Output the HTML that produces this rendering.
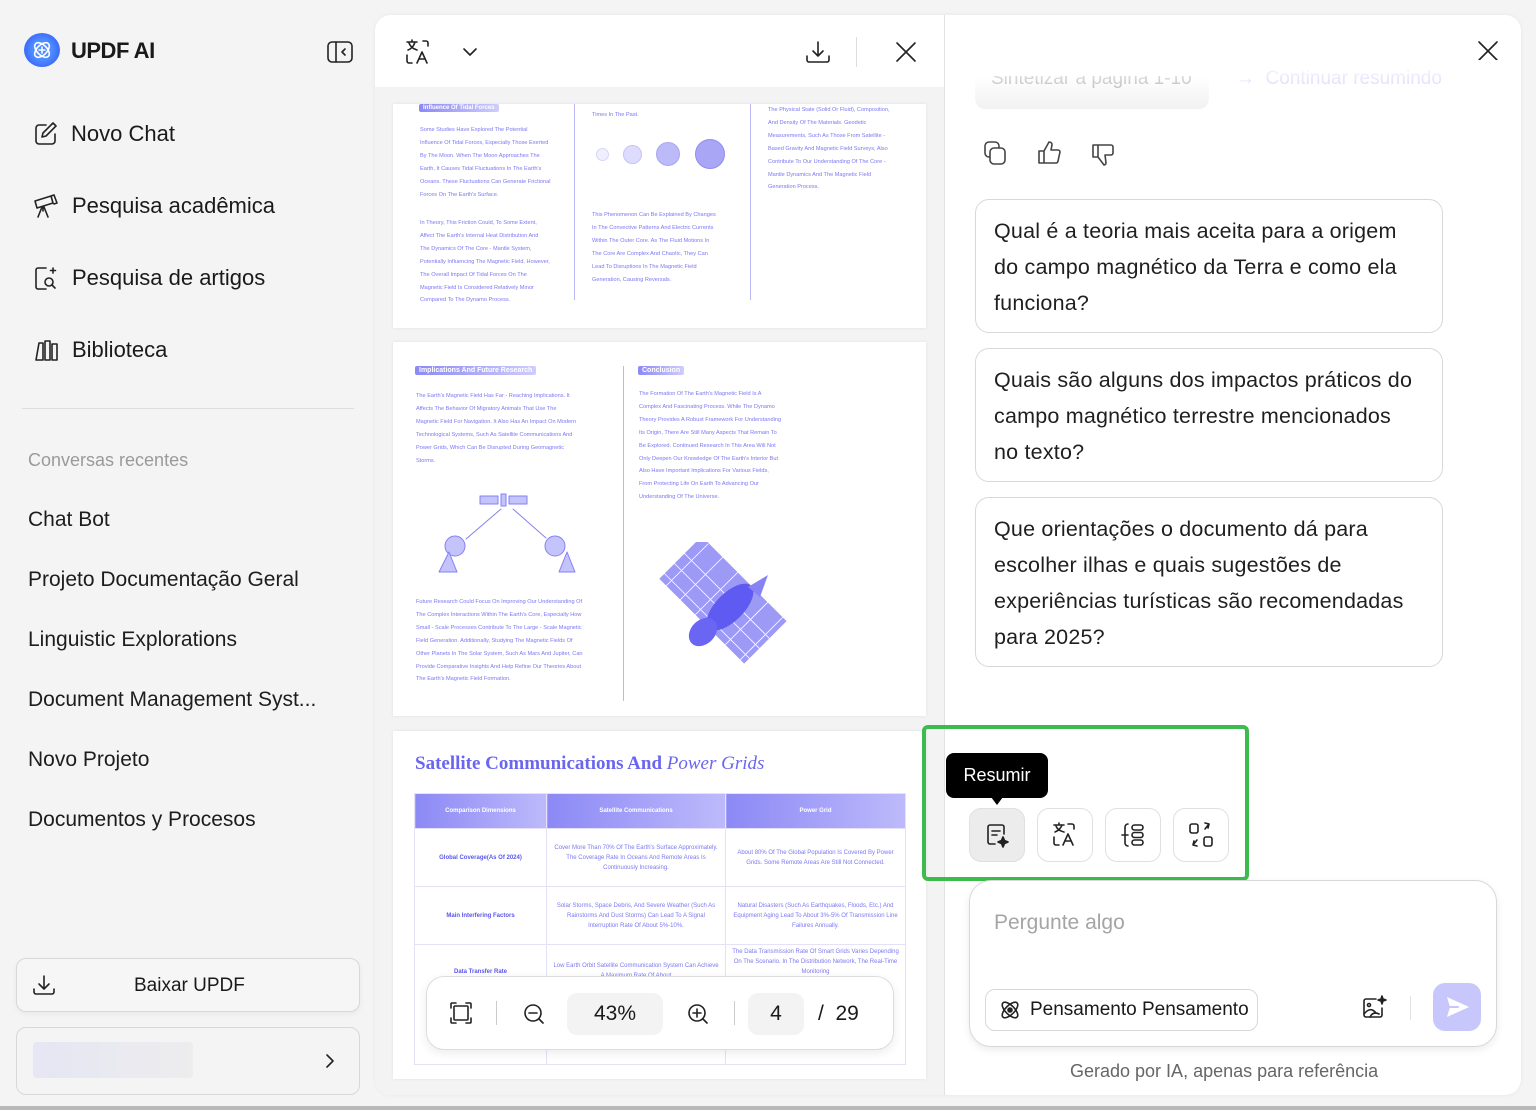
<!DOCTYPE html>
<html><head><meta charset="utf-8"><style>
*{box-sizing:border-box;margin:0;padding:0}
body{width:1536px;height:1110px;background:#f4f4f4;font-family:"Liberation Sans","DejaVu Sans",sans-serif;color:#1a1a1a;position:relative;overflow:hidden}
.a{position:absolute}
.nav{position:absolute;left:32px;font-size:22px;display:flex;align-items:center;gap:12px}
.nav svg{width:28px;height:28px}
.rc{position:absolute;left:28px;font-size:21px;color:#1d1d1d}
.pg{position:absolute;background:#fff;box-shadow:0 0 3px rgba(0,0,0,.08)}
.t{position:absolute;font-size:5.6px;line-height:12.9px;color:#7b78f2;white-space:nowrap}
.hd{position:absolute;background:linear-gradient(90deg,#8d89f5,#cfcdfb);color:#fff;font-size:7px;font-weight:bold;padding:1px 4px;border-radius:2px}
.q{position:absolute;left:975px;width:468px;border:1px solid #d8d8d8;border-radius:14px;padding:13px 18px;font-size:21.5px;line-height:36px;color:#1f1f1f;white-space:nowrap;letter-spacing:.2px}
.ib{position:absolute;top:808px;width:56px;height:54px;border:1px solid #e0e0e0;border-radius:12px;background:#fff;display:flex;align-items:center;justify-content:center}
.ib svg{width:30px;height:30px}
svg{fill:none;stroke:#222;stroke-width:1.6;stroke-linecap:round;stroke-linejoin:round}
td,th{border:1px solid #e3e2f7;text-align:center;font-size:6px;color:#7b78f2;padding:2px 6px;line-height:10px}
th{background:linear-gradient(90deg,#8c89f5,#bdbafb);color:#fff;height:35px}
</style></head><body>

<!-- sidebar -->
<div class="a" style="left:24px;top:33px;width:36px;height:34px;border-radius:50%;background:radial-gradient(circle,#4f8cff 40%,#3d6dfb 70%,#a9c4ff 100%)"></div>
<svg class="a" style="left:31px;top:39px;width:22px;height:22px;stroke:#fff;stroke-width:1.6" viewBox="0 0 22 22"><ellipse cx="11" cy="11" rx="9" ry="5" transform="rotate(45 11 11)"/><ellipse cx="11" cy="11" rx="9" ry="5" transform="rotate(-45 11 11)"/><path d="M11 8v6M8 11h6"/></svg>
<div class="a" style="left:71px;top:38px;font-size:22px;font-weight:bold;letter-spacing:-.5px">UPDF AI</div>
<svg class="a" style="left:326px;top:40px;width:28px;height:24px" viewBox="0 0 28 24"><rect x="2" y="2" width="24" height="20" rx="4"/><path d="M10 2v20M19 9l-3 3 3 3"/></svg>

<div class="nav" style="top:120px"><svg viewBox="0 0 28 28"><path d="M14 5H7a3 3 0 0 0-3 3v13a3 3 0 0 0 3 3h13a3 3 0 0 0 3-3v-7"/><path d="M21 3l3 3-10 10-4 1 1-4z"/></svg><span style="margin-left:-1px">Novo Chat</span></div>
<div class="nav" style="top:192px"><svg viewBox="0 0 28 28"><path d="M3 9l16-5 2 7-16 5zM19 4l3-1 3 8-3 1M10 15l-4 10M12 15l4 10M11 15v4"/></svg><span>Pesquisa acadêmica</span></div>
<div class="nav" style="top:264px"><svg viewBox="0 0 28 28"><path d="M14 4H6a2 2 0 0 0-2 2v17a2 2 0 0 0 2 2h8"/><circle cx="17" cy="18" r="4"/><path d="M20 21l3 3M21 4v5M18.5 6.5h5"/></svg><span>Pesquisa de artigos</span></div>
<div class="nav" style="top:336px"><svg viewBox="0 0 28 28"><path d="M4 24l3-17h4v17zM13 24V5h5v19zM20 24V8h5v16z"/></svg><span>Biblioteca</span></div>
<div class="a" style="left:22px;top:408px;width:332px;height:1px;background:#ddd"></div>
<div class="a" style="left:28px;top:450px;font-size:18px;color:#9a9a9a">Conversas recentes</div>
<div class="rc" style="top:508px">Chat Bot</div>
<div class="rc" style="top:568px">Projeto Documentação Geral</div>
<div class="rc" style="top:628px">Linguistic Explorations</div>
<div class="rc" style="top:688px">Document Management Syst...</div>
<div class="rc" style="top:748px">Novo Projeto</div>
<div class="rc" style="top:808px">Documentos y Procesos</div>

<div class="a" style="left:16px;top:958px;width:344px;height:54px;border:1px solid #d8d8d8;border-radius:10px;background:#f6f6f6;box-shadow:0 2px 6px rgba(0,0,0,.05)"></div>
<svg class="a" style="left:31px;top:972px;width:26px;height:26px" viewBox="0 0 26 26"><path d="M13 4v13M8 12l5 5 5-5M3 17v3a2 2 0 0 0 2 2h16a2 2 0 0 0 2-2v-3"/></svg>
<div class="a" style="left:134px;top:975px;font-size:19px">Baixar UPDF</div>
<div class="a" style="left:16px;top:1027px;width:344px;height:68px;border:1px solid #d8d8d8;border-radius:10px;background:#f4f4f4"></div>
<div class="a" style="left:33px;top:1042px;width:160px;height:36px;background:linear-gradient(90deg,#e4e4f4,#ececec);border-radius:4px;opacity:.9"></div>
<svg class="a" style="left:322px;top:1052px;width:16px;height:18px" viewBox="0 0 16 18"><path d="M5 3l6 6-6 6"/></svg>
<div class="a" style="left:0;top:1106px;width:1536px;height:4px;background:#b9b9b9"></div>

<!-- main card -->
<div class="a" style="left:375px;top:15px;width:1146px;height:1080px;background:#fff;border-radius:16px;overflow:hidden;box-shadow:0 0 4px rgba(0,0,0,.06)">
 <div class="a" style="left:0;top:72px;width:569px;height:1008px;background:#f3f3f3"></div>
 <div class="a" style="left:569px;top:0;width:1px;height:1080px;background:#e2e2e2"></div>
</div>
<!-- pdf header -->
<svg class="a" style="left:404px;top:38px;width:30px;height:28px" viewBox="0 0 30 28"><path d="M3 4h10M8 2v2M4 12c3-1 6-4 7-8M5 5c1 3 4 6 8 7M19 3h3a2 2 0 0 1 2 2v3M3 17v6a2 2 0 0 0 2 2h3M13 25l5-11 5 11M15 21h6"/></svg>
<svg class="a" style="left:462px;top:44px;width:16px;height:16px" viewBox="0 0 16 16"><path d="M2 5l6 6 6-6"/></svg>
<svg class="a" style="left:804px;top:38px;width:28px;height:28px" viewBox="0 0 28 28"><path d="M14 4v14M9 13l5 5 5-5M3 18v4a2 2 0 0 0 2 2h18a2 2 0 0 0 2-2v-4"/></svg>
<div class="a" style="left:856px;top:37px;width:1px;height:30px;background:#ddd"></div>
<svg class="a" style="left:894px;top:40px;width:24px;height:24px" viewBox="0 0 24 24"><path d="M3 3l18 18M21 3L3 21"/></svg>

<!-- page 1 -->
<div class="pg" style="left:393px;top:104px;width:533px;height:224px">
 <div class="hd" style="left:26px;top:0;font-size:6px">Influence Of Tidal Forces</div>
 <div class="t" style="left:27px;top:20px">Some Studies Have Explored The Potential<br>Influence Of Tidal Forces, Especially Those Exerted<br>By The Moon. When The Moon Approaches The<br>Earth, It Causes Tidal Fluctuations In The Earth's<br>Oceans. These Fluctuations Can Generate Frictional<br>Forces On The Earth's Surface.</div>
 <div class="t" style="left:27px;top:113px">In Theory, This Friction Could, To Some Extent,<br>Affect The Earth's Internal Heat Distribution And<br>The Dynamics Of The Core - Mantle System,<br>Potentially Influencing The Magnetic Field. However,<br>The Overall Impact Of Tidal Forces On The<br>Magnetic Field Is Considered Relatively Minor<br>Compared To The Dynamo Process.</div>
 <div class="a" style="left:181px;top:0;width:1px;height:196px;background:#b9b7f5"></div>
 <div class="t" style="left:199px;top:5px">Times In The Past.</div>
 <div class="a" style="left:203px;top:44px;width:13px;height:13px;border-radius:50%;background:#efeffd;border:1px solid #d6d5fa"></div>
 <div class="a" style="left:230px;top:41px;width:19px;height:19px;border-radius:50%;background:#dedcfd;border:1px solid #c4c2f8"></div>
 <div class="a" style="left:263px;top:38px;width:24px;height:24px;border-radius:50%;background:#bdbaf9;border:1px solid #a9a6f5"></div>
 <div class="a" style="left:302px;top:35px;width:30px;height:30px;border-radius:50%;background:#a9a6f6;border:1px solid #908df2"></div>
 <div class="t" style="left:199px;top:105px">This Phenomenon Can Be Explained By Changes<br>In The Convective Patterns And Electric Currents<br>Within The Outer Core. As The Fluid Motions In<br>The Core Are Complex And Chaotic, They Can<br>Lead To Disruptions In The Magnetic Field<br>Generation, Causing Reversals.</div>
 <div class="a" style="left:357px;top:0;width:1px;height:196px;background:#b9b7f5"></div>
 <div class="t" style="left:375px;top:0">The Physical State (Solid Or Fluid), Composition,<br>And Density Of The Materials. Geodetic<br>Measurements, Such As Those From Satellite -<br>Based Gravity And Magnetic Field Surveys, Also<br>Contribute To Our Understanding Of The Core -<br>Mantle Dynamics And The Magnetic Field<br>Generation Process.</div>
</div>

<!-- page 2 -->
<div class="pg" style="left:393px;top:342px;width:533px;height:374px">
 <div class="hd" style="left:22px;top:24px">Implications And Future Research</div>
 <div class="t" style="left:23px;top:48px">The Earth's Magnetic Field Has Far - Reaching Implications. It<br>Affects The Behavior Of Migratory Animals That Use The<br>Magnetic Field For Navigation. It Also Has An Impact On Modern<br>Technological Systems, Such As Satellite Communications And<br>Power Grids, Which Can Be Disrupted During Geomagnetic<br>Storms.</div>
 <svg class="a" style="left:40px;top:142px;width:150px;height:95px;stroke:#8481f3;stroke-width:1" viewBox="0 0 150 95"><rect x="47" y="12" width="18" height="8" fill="#c5c3fb"/><rect x="68" y="10" width="5" height="12" fill="#c5c3fb"/><rect x="76" y="12" width="18" height="8" fill="#c5c3fb"/><path d="M68 25L33 55M80 25l33 29"/><circle cx="22" cy="62" r="10" fill="#c5c3fb"/><circle cx="122" cy="62" r="10" fill="#c5c3fb"/><path d="M6 88l10-20 8 20zM126 88l8-20 8 20z" fill="#c5c3fb"/></svg>
 <div class="t" style="left:23px;top:254px">Future Research Could Focus On Improving Our Understanding Of<br>The Complex Interactions Within The Earth's Core, Especially How<br>Small - Scale Processes Contribute To The Large - Scale Magnetic<br>Field Generation. Additionally, Studying The Magnetic Fields Of<br>Other Planets In The Solar System, Such As Mars And Jupiter, Can<br>Provide Comparative Insights And Help Refine Our Theories About<br>The Earth's Magnetic Field Formation.</div>
 <div class="a" style="left:230px;top:24px;width:1px;height:335px;background:#b9b7f5"></div>
 <div class="hd" style="left:245px;top:24px">Conclusion</div>
 <div class="t" style="left:246px;top:46px">The Formation Of The Earth's Magnetic Field Is A<br>Complex And Fascinating Process. While The Dynamo<br>Theory Provides A Robust Framework For Understanding<br>Its Origin, There Are Still Many Aspects That Remain To<br>Be Explored. Continued Research In This Area Will Not<br>Only Deepen Our Knowledge Of The Earth's Interior But<br>Also Have Important Implications For Various Fields,<br>From Protecting Life On Earth To Advancing Our<br>Understanding Of The Universe.</div>
 <svg class="a" style="left:265px;top:200px;width:145px;height:130px;stroke:none" viewBox="0 0 145 130"><rect x="20" y="0" width="60" height="120" fill="#9d9af6" transform="rotate(-45 72 65) translate(22 -5)"/><g stroke="#fff" stroke-width=".8"><path d="M5 30L105 130M15 20l100 100M25 10l100 100M2 50L50 2M15 65L65 15M30 80L80 30M45 95L95 45M60 110L110 60M75 125L125 75"/></g><ellipse cx="72" cy="65" rx="14" ry="30" fill="#5f5af2" transform="rotate(45 72 65)"/><path d="M90 45l20-12-8 22z" fill="#8883f5"/><ellipse cx="45" cy="90" rx="12" ry="16" fill="#6a65f3" transform="rotate(45 45 90)"/></svg>
</div>

<!-- page 3 -->
<div class="pg" style="left:393px;top:731px;width:533px;height:348px;overflow:hidden">
 <div class="a" style="left:22px;top:22px;font-family:'Liberation Serif',serif;font-size:19px;color:#6a66f0;font-weight:bold;white-space:nowrap">Satellite Communications And <i style="font-weight:normal">Power Grids</i></div>
 <table class="a" style="left:21px;top:62px;width:492px;border-collapse:collapse;table-layout:fixed">
  <tr><th style="width:132px">Comparison Dimensions</th><th style="width:179px">Satellite Communications</th><th>Power Grid</th></tr>
  <tr style="height:58px"><td style="font-weight:bold;color:#5a56ee">Global Coverage(As Of 2024)</td><td>Cover More Than 70% Of The Earth's Surface Approximately. The Coverage Rate In Oceans And Remote Areas Is Continuously Increasing.</td><td>About 80% Of The Global Population Is Covered By Power Grids. Some Remote Areas Are Still Not Connected.</td></tr>
  <tr style="height:58px"><td style="font-weight:bold;color:#5a56ee">Main Interfering Factors</td><td>Solar Storms, Space Debris, And Severe Weather (Such As Rainstorms And Dust Storms) Can Lead To A Signal Interruption Rate Of About 5%-10%.</td><td>Natural Disasters (Such As Earthquakes, Floods, Etc.) And Equipment Aging Lead To About 3%-5% Of Transmission Line Failures Annually.</td></tr>
  <tr style="height:120px"><td style="font-weight:bold;color:#5a56ee;vertical-align:top;padding-top:22px">Data Transfer Rate</td><td style="vertical-align:top;padding-top:16px">Low Earth Orbit Satellite Communication System Can Achieve A Maximum Rate Of About<br><br><br><br><br>Market Scale Reached Approximately 300 Billion U.S. Dollars In 2024.</td><td style="vertical-align:top">The Data Transmission Rate Of Smart Grids Varies Depending On The Scenario. In The Distribution Network, The Real-Time Monitoring<br><br><br><br><br>Dollars.</td></tr>
 </table>
</div>

<!-- zoom bar -->
<div class="a" style="left:426px;top:976px;width:468px;height:74px;background:#fff;border:1px solid #ddd;border-radius:18px;box-shadow:0 3px 10px rgba(0,0,0,.08)"></div>
<svg class="a" style="left:449px;top:1001px;width:24px;height:24px" viewBox="0 0 24 24"><rect x="5" y="5" width="14" height="14" rx="1"/><path d="M2 7V3a1 1 0 0 1 1-1h4M17 2h4a1 1 0 0 1 1 1v4M22 17v4a1 1 0 0 1-1 1h-4M7 22H3a1 1 0 0 1-1-1v-4"/></svg>
<div class="a" style="left:496px;top:1001px;width:1px;height:24px;background:#ccc"></div>
<svg class="a" style="left:522px;top:1002px;width:24px;height:24px" viewBox="0 0 24 24"><circle cx="11" cy="11" r="8"/><path d="M7 11h8M17 17l4 4"/></svg>
<div class="a" style="left:567px;top:993px;width:96px;height:42px;background:#f3f3f3;border-radius:10px;font-size:21px;text-align:center;line-height:42px">43%</div>
<svg class="a" style="left:686px;top:1002px;width:24px;height:24px" viewBox="0 0 24 24"><circle cx="11" cy="11" r="8"/><path d="M7 11h8M11 7v8M17 17l4 4"/></svg>
<div class="a" style="left:734px;top:1001px;width:1px;height:24px;background:#ccc"></div>
<div class="a" style="left:748px;top:993px;width:56px;height:42px;background:#f3f3f3;border-radius:10px;font-size:21px;text-align:center;line-height:42px">4</div>
<div class="a" style="left:818px;top:1002px;font-size:21px">/&nbsp; 29</div>

<!-- chat -->
<svg class="a" style="left:1477px;top:40px;width:22px;height:22px" viewBox="0 0 22 22"><path d="M2 2l18 18M20 2L2 20"/></svg>
<div class="a" style="left:975px;top:76px;width:234px;height:33px;background:linear-gradient(#fff,#f1f1f1);border-radius:0 0 10px 10px;overflow:hidden"><div style="margin-top:-8px;padding-left:16px;font-size:19px;color:#c6c6c6">Sintetizar a página 1-10</div></div>
<div class="a" style="left:1236px;top:68px;font-size:19px;color:#e0defc;height:31px;overflow:hidden">→&nbsp; Continuar resumindo</div>
<div class="a" style="left:945px;top:60px;width:576px;height:26px;background:linear-gradient(#fff,rgba(255,255,255,0))"></div>
<svg class="a" style="left:983px;top:140px;width:26px;height:28px;stroke:#444" viewBox="0 0 26 28"><rect x="2" y="2" width="14" height="15" rx="4"/><rect x="7" y="8" width="15" height="16" rx="4" fill="#fff"/></svg>
<svg class="a" style="left:1037px;top:140px;width:26px;height:26px;stroke:#444" viewBox="0 0 26 26"><path d="M2 11h5v12H2zM7 11l5-9c2 0 3 1 3 3l-1 5h7a2 2 0 0 1 2 2l-2 9a2 2 0 0 1-2 2H7"/></svg>
<svg class="a" style="left:1091px;top:142px;width:26px;height:26px;stroke:#444" viewBox="0 0 26 26"><path d="M2 3h5v12H2zM7 3h13a2 2 0 0 1 2 2v6a2 2 0 0 1-2 2h-6l1 8c0 1-1 2-2 2L7 15"/></svg>

<div class="q" style="top:199px;height:134px">Qual é a teoria mais aceita para a origem<br>do campo magnético da Terra e como ela<br>funciona?</div>
<div class="q" style="top:348px;height:134px">Quais são alguns dos impactos práticos do<br>campo magnético terrestre mencionados<br>no texto?</div>
<div class="q" style="top:497px;height:170px">Que orientações o documento dá para<br>escolher ilhas e quais sugestões de<br>experiências turísticas são recomendadas<br>para 2025?</div>

<div class="a" style="left:922px;top:725px;width:327px;height:156px;border:4px solid #3dbb4c;border-radius:6px"></div>
<div class="a" style="left:946px;top:753px;width:102px;height:45px;background:#000;border-radius:8px;color:#fff;font-size:18px;line-height:45px;text-align:center">Resumir</div>
<div class="a" style="left:991px;top:797px;width:0;height:0;border-left:6px solid transparent;border-right:6px solid transparent;border-top:8px solid #000"></div>
<div class="ib" style="left:969px;background:#ececec"><svg viewBox="0 0 30 30"><path d="M13 24H8a2 2 0 0 1-2-2V7a2 2 0 0 1 2-2h12a2 2 0 0 1 2 2v7M10 11h8M10 15h5"/><path d="M21 17l1.5 3.5L26 22l-3.5 1.5L21 27l-1.5-3.5L16 22l3.5-1.5z" fill="#222"/></svg></div>
<div class="ib" style="left:1037px"><svg viewBox="0 0 30 30"><path d="M4 5h10M9 3v2M5 12c3-1 6-4 7-7M6 6c1 3 4 5 8 6M18 4h4a2 2 0 0 1 2 2v3M4 17v6a2 2 0 0 0 2 2h3M13 25l5-11 5 11M15 21h6"/></svg></div>
<div class="ib" style="left:1105px"><svg viewBox="0 0 30 30"><path d="M10 4a3 3 0 0 0-3 3v16a3 3 0 0 0 3 3M4 15h6"/><rect x="14" y="5" width="11" height="5" rx="2.5"/><rect x="14" y="12.5" width="11" height="5" rx="2.5"/><rect x="14" y="20" width="11" height="5" rx="2.5"/></svg></div>
<div class="ib" style="left:1173px"><svg viewBox="0 0 30 30"><rect x="4" y="4" width="8" height="9" rx="2"/><rect x="18" y="17" width="8" height="9" rx="2"/><path d="M19 3l4 1-1 4M23 4l-4 5M11 26l-4-1 1-4M7 25l4-5"/></svg></div>

<div class="a" style="left:969px;top:880px;width:528px;height:167px;border:1px solid #d8d8d8;border-radius:22px;background:#fff;box-shadow:0 3px 8px rgba(0,0,0,.08)"></div>
<div class="a" style="left:994px;top:911px;font-size:21px;color:#a5a5a5">Pergunte algo</div>
<div class="a" style="left:985px;top:989px;width:273px;height:42px;border:1px solid #d8d8d8;border-radius:10px;display:flex;align-items:center;padding-left:12px;gap:8px;font-size:19px;white-space:nowrap"><svg style="width:24px;height:24px;flex:none" viewBox="0 0 24 24"><ellipse cx="12" cy="12" rx="10" ry="4.5" transform="rotate(45 12 12)"/><ellipse cx="12" cy="12" rx="10" ry="4.5" transform="rotate(-45 12 12)"/><circle cx="12" cy="12" r="2" fill="#222"/></svg>Pensamento Pensamento</div>
<svg class="a" style="left:1360px;top:994px;width:28px;height:28px" viewBox="0 0 28 28"><path d="M16 5H6a2 2 0 0 0-2 2v14a2 2 0 0 0 2 2h14a2 2 0 0 0 2-2v-7"/><path d="M4 20c4-5 8-6 12-1M10 23c2-4 5-5 9-3"/><circle cx="9" cy="11" r="1.5"/><path d="M22 2l1 3 3 1-3 1-1 3-1-3-3-1 3-1z" fill="#222"/></svg>
<div class="a" style="left:1410px;top:996px;width:1px;height:24px;background:#e2e2e2"></div>
<div class="a" style="left:1433px;top:983px;width:48px;height:48px;border-radius:12px;background:#c8c7fb"></div>
<svg class="a" style="left:1445px;top:995px;width:26px;height:24px;stroke:none" viewBox="0 0 26 24"><path d="M2 2l22 10L2 22l3-10z" fill="#fff"/><path d="M5 12h8" stroke="#c8c7fb" stroke-width="2"/></svg>
<div class="a" style="left:1070px;top:1061px;font-size:18px;color:#666">Gerado por IA, apenas para referência</div>
</body></html>
